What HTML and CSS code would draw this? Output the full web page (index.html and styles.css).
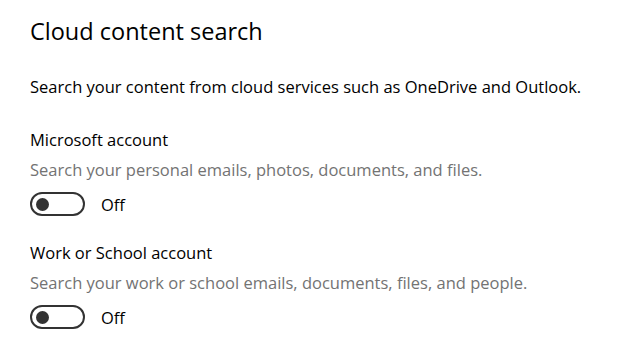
FILE: index.html
```html
<!DOCTYPE html>
<html lang="en">

<head>
    <meta charset="utf-8">
    <title>Cloud content search</title>
    <link rel="stylesheet" href="styles.css">
</head>

<body>

    <main class="page">

        <h1>Cloud content search</h1>

        <p class="intro">Search your content from cloud services such as OneDrive and Outlook.</p>

        <section class="setting">
            <h2>Microsoft account</h2>
            <p class="desc">Search your personal emails, photos, documents, and files.</p>
            <div class="switch">
                <span class="track"><span class="knob"></span></span>
                <span class="state">Off</span>
            </div>
        </section>

        <section class="setting">
            <h2>Work or School account</h2>
            <p class="desc">Search your work or school emails, documents, files, and people.</p>
            <div class="switch">
                <span class="track"><span class="knob"></span></span>
                <span class="state">Off</span>
            </div>
        </section>

    </main>

</body>

</html>
```

FILE: styles.css
```css
body {
    margin: 0;
    background-color: #fff;
    color: #000;
    font-family: 'Open Sans', sans-serif;
}

.page {
    padding: 13px 30px 0;
}

h1 {
    margin: 0;
    font-size: 23.5px;
    font-weight: 400;
    line-height: 36px;
}

.intro {
    margin: 26px 0;
    font-size: 16.5px;
    line-height: 24px;
}

.setting {
    margin-top: 16px;
}

h2 {
    margin: 0;
    font-size: 16.5px;
    font-weight: 400;
    line-height: 30px;
}

.desc {
    margin: 0;
    color: #737373;
    font-size: 16.5px;
    line-height: 30px;
}

.switch {
    display: flex;
    align-items: center;
    gap: 16px;
    height: 36px;
    margin-top: 1px;
}

.track {
    box-sizing: border-box;
    width: 55px;
    height: 24px;
    border: 2px solid #333;
    border-radius: 12px;
    display: flex;
    align-items: center;
    padding-left: 4px;
}

.knob {
    width: 13px;
    height: 13px;
    border-radius: 50%;
    background-color: #333;
}

.state {
    font-size: 16.5px;
}
```
